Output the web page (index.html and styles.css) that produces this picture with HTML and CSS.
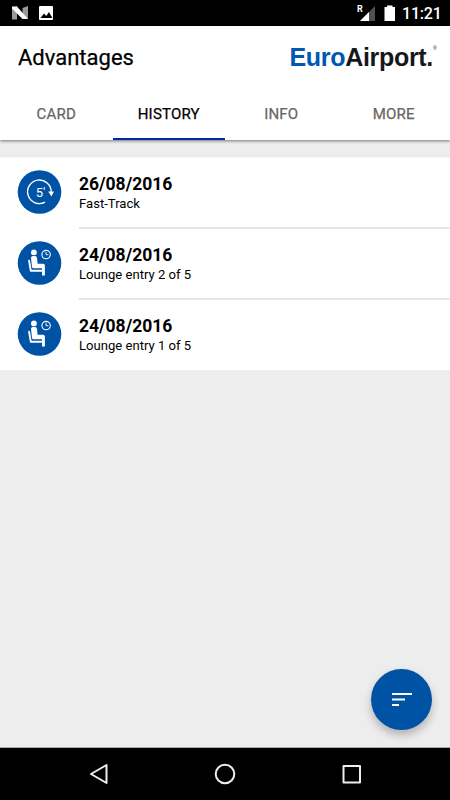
FILE: index.html
```html
<!DOCTYPE html>
<html lang="en">
<head>
<meta charset="utf-8">
<title>Advantages</title>
<link rel="stylesheet" href="styles.css">
</head>
<body>
<div class="status">
  <svg class="notif" width="44" height="16" viewBox="0 0 44 16">
    <path fill="#999" d="M0 2.400L5 0v13.500H0zM10.500 2L16 0v13L10.500 11z"/>
    <path fill="#fff" d="M0 .5H5L16 13h-5.500L0 2.500z"/>
    <rect x="27" width="14" height="14" rx="1" fill="#fff"/>
    <path d="M28.500 12l3.500-4.500 2.300 2.500 2.600-4 3.500 6z"/>
  </svg>
  <svg class="signal" width="40" height="20" viewBox="0 0 40 20">
    <path fill="#505050" d="M17 3v15H2z"/>
    <path fill="#fff" d="M11 9v9H2z"/>
    <path fill="#fff" d="M26.500 4h2.500V2.500h5.500V4H37v14H26.500z"/>
  </svg>
  <span class="roaming">R</span>
  <span class="clock">11:21</span>
</div>
<header class="header">
  <div class="toolbar">
    <h1 class="title">Advantages</h1>
    <div class="logo"><span class="euro">Euro</span>Airport.<sup class="reg">®</sup></div>
  </div>
  <nav class="tabs">
    <span class="tab">CARD</span>
    <span class="tab active">HISTORY</span>
    <span class="tab">INFO</span>
    <span class="tab">MORE</span>
  </nav>
</header>
<main class="content">
  <svg class="defs" width="0" height="0">
    <symbol id="lounge" viewBox="0 0 44 44">
      <circle cx="22" cy="22" r="21.800" fill="#0052a5"/>
      <circle cx="16.400" cy="11.400" r="2.900" fill="#fff"/>
      <path fill="#fff" d="M13.500 17q0-2 1.900-2h2.200q1.700 0 1.900 2l.6 5.800h5.600q1.700 0 1.700 1.700v10.100h-2.900v-7.300h-8.500q-1.400 0-1.500-1.500z"/>
      <path d="M11.600 19.800l1.700 10H24" fill="none" stroke="#fff" stroke-width="1.900" stroke-linecap="round" stroke-linejoin="round"/>
      <circle cx="28.600" cy="13.600" r="4.200" fill="none" stroke="#fff" stroke-width="1.100"/>
      <path d="M28.500 10.800v2.900h2.300" fill="none" stroke="#fff" stroke-width=".9"/>
    </symbol>
  </svg>
  <ul class="list">
    <li class="row">
      <svg class="icon" viewBox="0 0 44 44">
        <circle cx="22" cy="22" r="21.800" fill="#0052a5"/>
        <path d="M27.500 32.200A11.800 11.800 0 1 1 33.700 22" fill="none" stroke="#fff" stroke-width="1.400"/>
        <path d="M30.700 21.500h5.800l-2.600 5z" fill="#fff"/>
        <text class="five" x="18.300" y="26.700">5′</text>
      </svg>
      <div class="text"><div class="date">26/08/2016</div><div class="desc">Fast-Track</div></div>
    </li>
    <li class="row">
      <svg class="icon"><use href="#lounge"/></svg>
      <div class="text"><div class="date">24/08/2016</div><div class="desc">Lounge entry 2 of 5</div></div>
    </li>
    <li class="row">
      <svg class="icon"><use href="#lounge"/></svg>
      <div class="text"><div class="date">24/08/2016</div><div class="desc">Lounge entry 1 of 5</div></div>
    </li>
  </ul>
</main>
<div class="fab">
  <svg width="61" height="61" viewBox="0 0 61 61"><path fill="#fff" d="M21 24h20v2H21zM21 29.500h13v2H21zM21 35h7v2h-7z"/></svg>
</div>
<footer class="navbar">
  <svg width="450" height="52" viewBox="0 0 450 52" fill="none" stroke="#eee" stroke-width="2" stroke-linejoin="round">
    <path d="M106.500 17v18L91 26z"/>
    <circle cx="225" cy="26" r="9.300"/>
    <rect x="343.500" y="18" width="16.500" height="16.500"/>
  </svg>
</footer>
</body>
</html>
```
FILE: styles.css
```css
* { box-sizing: border-box; }
body {
  margin: 0;
  width: 450px;
  height: 800px;
  display: flex;
  flex-direction: column;
  overflow: hidden;
  position: relative;
  background: #ededed;
  color: #000;
  font-family: Roboto, sans-serif;
}
.status {
  height: 26px;
  flex: none;
  display: flex;
  background: #000;
  color: #fff;
  position: relative;
}
.notif { margin: 6px 0 0 12px; }
.signal { margin: 3px 0 0 auto; }
.roaming {
  position: absolute;
  left: 357px;
  top: 4px;
  font-size: 9px;
  line-height: 10px;
  font-weight: 700;
}
.clock {
  width: 52px;
  padding-left: 4px;
  font-size: 16px;
  font-weight: 500;
  line-height: 28px;
  letter-spacing: -0.2px;
}
.header {
  height: 114px;
  flex: none;
  background: #fff;
  box-shadow: 0 1px 3px rgba(0, 0, 0, 0.5);
  position: relative;
}
.toolbar {
  height: 64px;
  padding: 0 17px 0 18px;
  display: flex;
  align-items: center;
  justify-content: space-between;
}
.title {
  margin: -1px 0 0;
  font-size: 22px;
  font-weight: 400;
  -webkit-text-stroke: 0.25px #000;
}
.logo {
  display: flex;
  margin-top: -2px;
  font: 700 25px/30px "Liberation Sans", sans-serif;
  letter-spacing: -0.3px;
  color: #17171b;
}
.euro { color: #0058b0; }
.reg {
  width: 0;
  font-size: 5px;
  line-height: 12px;
  font-weight: 400;
}
.tabs { display: flex; height: 50px; }
.tab {
  flex: 1;
  text-align: center;
  font-size: 15px;
  font-weight: 400;
  letter-spacing: 0.2px;
  line-height: 49px;
  color: #666;
  -webkit-text-stroke: 0.25px currentColor;
}
.tab.active { color: #000; border-bottom: 2px solid #0028a0; }
.content { flex: 1; padding-top: 17px; }
.defs { position: absolute; }
.list { list-style: none; margin: 0; padding: 0; background: #fff; border-top: 1px solid #f6f6f6; }
.row { height: 71px; display: flex; padding-left: 17px; }
.row:last-child { height: 70px; }
.icon { width: 45px; height: 44px; margin: 12px 17px 0 0; flex: none; }
.five { font: 13px Roboto, sans-serif; fill: #fff; }
.text { flex: 1; border-bottom: 2px solid #e6e6e6; padding-top: 15px; }
.row:last-child .text { border-bottom: 0; }
.date { font-size: 17.5px; font-weight: 700; line-height: 22px; }
.desc { font-size: 13.1px; line-height: 17px; }
.fab {
  position: absolute;
  left: 371px;
  top: 669px;
  width: 61px;
  height: 61px;
  border-radius: 50%;
  background: #0052a5;
  box-shadow: 0 5px 9px rgba(0, 0, 0, 0.25);
}
.navbar { height: 53px; flex: none; background: #000; border-top: 1px solid #aaa; }
```
